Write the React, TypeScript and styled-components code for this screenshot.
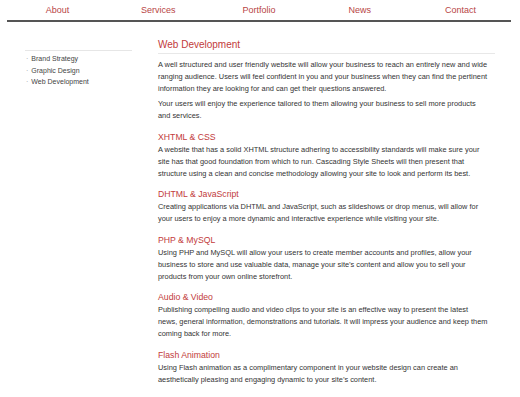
import styled, { createGlobalStyle } from "styled-components";

const Global = createGlobalStyle`
  html, body {
    margin: 0;
    padding: 0;
    background: #fff;
    font-family: "Liberation Sans", Arial, sans-serif;
    color: #333;
  }
`;

const Page = styled.div`
  width: 520px;
  padding: 0 9px 0 7px;
  box-sizing: border-box;
`;

const Nav = styled.nav`
  display: grid;
  grid-template-columns: repeat(5, 1fr);
  border-bottom: 2px solid #555;
  height: 20px;
`;

const NavLink = styled.a`
  font-size: 9px;
  line-height: 20px;
  text-align: center;
  color: #b84545;
  text-decoration: none;
`;

const Body = styled.div`
  display: grid;
  grid-template-columns: 107px 337px;
  column-gap: 26px;
  padding-left: 18px;
`;

const Sidebar = styled.ul`
  list-style: none;
  margin: 28px 0 0;
  padding: 2px 0 0;
  border-top: 1px solid #e6e6e6;
`;

const SideItem = styled.li`
  font-size: 7px;
  line-height: 11.5px;
  color: #444;
  padding-left: 1px;
  &::before {
    content: "·";
    color: #999;
    margin-right: 3px;
  }
`;

const Main = styled.main`
  padding-top: 17px;
`;

const Title = styled.h1`
  font-size: 10px;
  font-weight: normal;
  color: #c23b3b;
  margin: 0 0 5px;
  padding-bottom: 2px;
  line-height: 12px;
  border-bottom: 1px solid #e8e8e8;
`;

const Para = styled.p`
  font-size: 7.4px;
  line-height: 12px;
  margin: 0 0 3px;
  white-space: nowrap;
`;

const Line = styled.span`
  display: block;
`;

const Section = styled.section`
  margin-top: 8.5px;
`;

const SubTitle = styled.h2`
  font-size: 8.7px;
  font-weight: normal;
  color: #c23b3b;
  margin: 0 0 1px;
  line-height: 12px;
`;

const intro = [
  [
    "A well structured and user friendly website will allow your business to reach an entirely new and wide",
    "ranging audience. Users will feel confident in you and your business when they can find the pertinent",
    "information they are looking for and can get their questions answered.",
  ],
  [
    "Your users will enjoy the experience tailored to them allowing your business to sell more products",
    "and services.",
  ],
];

const sections = [
  {
    title: "XHTML & CSS",
    lines: [
      "A website that has a solid XHTML structure adhering to accessibility standards will make sure your",
      "site has that good foundation from which to run. Cascading Style Sheets will then present that",
      "structure using a clean and concise methodology allowing your site to look and perform its best.",
    ],
  },
  {
    title: "DHTML & JavaScript",
    lines: [
      "Creating applications via DHTML and JavaScript, such as slideshows or drop menus, will allow for",
      "your users to enjoy a more dynamic and interactive experience while visiting your site.",
    ],
  },
  {
    title: "PHP & MySQL",
    lines: [
      "Using PHP and MySQL will allow your users to create member accounts and profiles, allow your",
      "business to store and use valuable data, manage your site’s content and allow you to sell your",
      "products from your own online storefront.",
    ],
  },
  {
    title: "Audio & Video",
    lines: [
      "Publishing compelling audio and video clips to your site is an effective way to present the latest",
      "news, general information, demonstrations and tutorials. It will impress your audience and keep them",
      "coming back for more.",
    ],
  },
  {
    title: "Flash Animation",
    lines: [
      "Using Flash animation as a complimentary component in your website design can create an",
      "aesthetically pleasing and engaging dynamic to your site’s content.",
    ],
  },
];

const Text = ({ lines }: { lines: string[] }) => (
  <Para>
    {lines.map((l) => (
      <Line key={l}>{l}</Line>
    ))}
  </Para>
);

export default function App() {
  return (
    <Page>
      <Global />
      <Nav>
        {["About", "Services", "Portfolio", "News", "Contact"].map((n) => (
          <NavLink key={n} href="#">
            {n}
          </NavLink>
        ))}
      </Nav>
      <Body>
        <Sidebar>
          <SideItem>Brand Strategy</SideItem>
          <SideItem>Graphic Design</SideItem>
          <SideItem>Web Development</SideItem>
        </Sidebar>
        <Main>
          <Title>Web Development</Title>
          {intro.map((p) => (
            <Text key={p[0]} lines={p} />
          ))}
          {sections.map((s) => (
            <Section key={s.title}>
              <SubTitle>{s.title}</SubTitle>
              <Text lines={s.lines} />
            </Section>
          ))}
        </Main>
      </Body>
    </Page>
  );
}
